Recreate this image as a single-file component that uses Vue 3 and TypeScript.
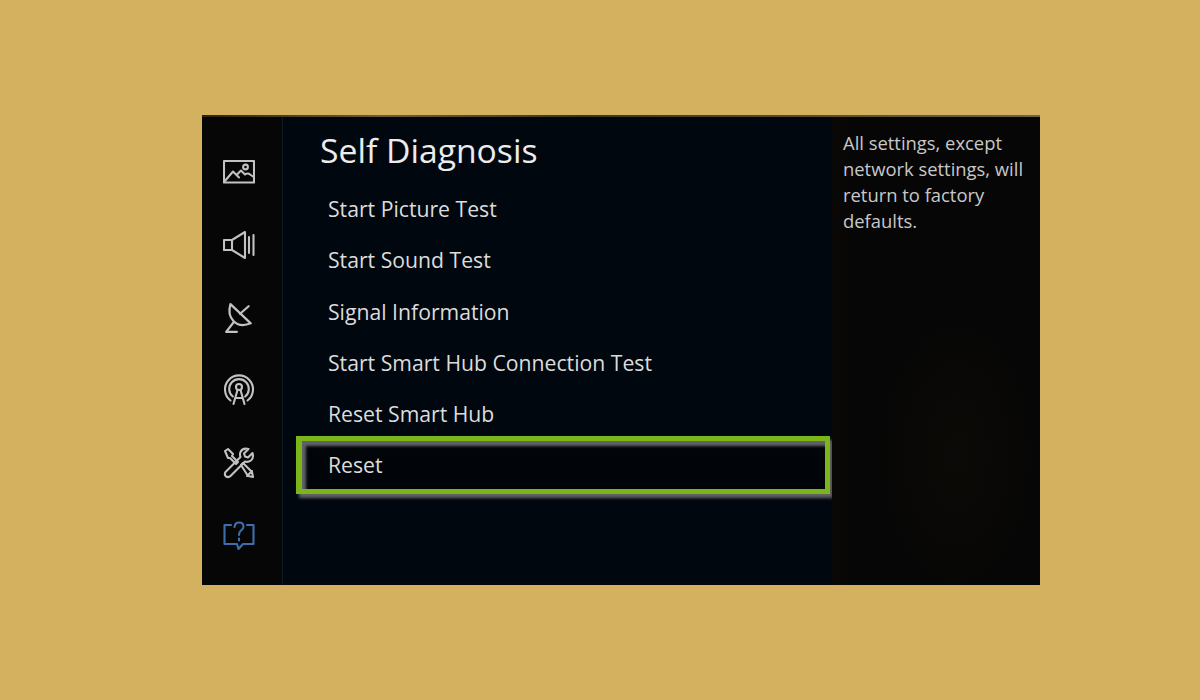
<script setup lang="ts">
const items = [
  'Start Picture Test',
  'Start Sound Test',
  'Signal Information',
  'Start Smart Hub Connection Test',
  'Reset Smart Hub',
  'Reset',
];
const selected = 'Reset';
</script>

<template>
  <div class="page">
    <div class="screen">
      <aside class="rail">
        <!-- picture -->
        <svg class="icon" viewBox="0 0 32 24">
          <rect x="1" y="1" width="30" height="21.5" />
          <path d="M1.5 21.5 L10 11.5 L16 17.5 M13.5 15 L18 10.5 L22 14.5 Q25 12.5 27 14.5 L30 16.5" />
          <circle cx="22.5" cy="7" r="2.4" />
        </svg>
        <!-- sound -->
        <svg class="icon" viewBox="0 0 32 30">
          <path d="M1 10 H9 V20 H1 Z M9 10 L22 2 V28 L9 20" />
          <path d="M26 7 V23 M30.5 5 V25" />
        </svg>
        <!-- broadcast dish -->
        <svg class="icon" viewBox="0 0 28 30">
          <path d="M6 2 Q3 12 9 18 Q15 24 25 20 Z" />
          <path d="M15 11 L23 4" />
          <path d="M9 19 L2 28 M2 28 H12" />
        </svg>
        <!-- network -->
        <svg class="icon" viewBox="0 0 32 32">
          <path d="M7.5 26.5 A14 14 0 1 1 24.5 26.5" />
          <path d="M9.8 22.5 A9.8 9.8 0 1 1 22.2 22.5" />
          <circle cx="16" cy="13" r="3" />
          <path d="M14.5 16 L10.5 30 M17.5 16 L21.5 30 M12.5 24 H19.5" />
        </svg>
        <!-- tools -->
        <svg class="icon" viewBox="0 0 32 32">
          <path d="M2 4 L5 2 L10 7 L9 9 L15 15 L13 17 L7 11 L5 11 Z" />
          <path d="M29.5 6 L25 10.5 L22 9.5 L21 6.5 L25.5 2 Q19.5 0.5 17.5 5 Q16.5 8 17.5 10 L2.5 25 Q1 27.5 3 29.5 Q5.5 31 7.5 29 L22 14.5 Q25 15.5 28 13.5 Q31 11 29.5 6 Z" />
          <path d="M18 18 L20 16 L29 25 L30 30 L25 29 Z M24 29 L29 24" />
        </svg>
        <!-- support -->
        <svg class="icon support" viewBox="0 0 32 30">
          <path d="M8 4 H1.5 V23 H14 L15.5 28 L20 23 H30.5 V4 H24" />
          <path d="M11.5 6 Q12 1.5 16 1.5 Q20.5 1.5 20.5 5.5 Q20.5 8 18 9.5 Q16 11 16 14" />
          <path d="M16 17.5 V19.5" />
        </svg>
      </aside>

      <main class="menu">
        <h1 class="title">Self Diagnosis</h1>
        <ul class="list">
          <li v-for="item in items" :key="item" class="row" :class="{ active: item === selected }">
            {{ item }}
          </li>
        </ul>
      </main>

      <section class="help">
        <p>All settings, except network settings, will return to factory defaults.</p>
      </section>
    </div>
  </div>
</template>

<style>
html, body { margin: 0; background: #d4b15f; }
</style>

<style scoped>
.page {
  width: 1200px;
  height: 700px;
  box-sizing: border-box;
  padding: 115px 160px 115px 202px;
  background: #d4b15f;
  font-family: 'Open Sans', 'Noto Sans', sans-serif;
}

.screen {
  position: relative;
  display: flex;
  height: 470px;
  background: #050505;
  box-sizing: border-box;
  padding-top: 2px;
}

/* warm glow along the top edge of the tv */
.screen::before {
  content: '';
  position: absolute;
  top: 0;
  left: 0;
  right: 0;
  height: 2px;
  background: linear-gradient(90deg, #2a2418, #6b5c3c 22%, #3b3322 45%, #5a4d33 75%, #6b6350);
}

.rail {
  width: 80px;
  flex: none;
  box-sizing: border-box;
  display: flex;
  flex-direction: column;
  align-items: center;
  padding: 39px 7px 33px 0;
  justify-content: space-between;
  background: #060606;
}

.icon {
  width: 32px;
  height: 32px;
  fill: none;
  stroke: #c2c2c2;
  stroke-width: 2.1;
  stroke-linejoin: round;
  stroke-linecap: round;
}

.support { stroke: #3c6fb0; }

.menu {
  width: 550px;
  flex: none;
  box-sizing: border-box;
  padding: 0 2px 0 13px;
  background: #01070e;
  border-left: 1px solid #0e1a20;
}

.title {
  margin: 0;
  padding-left: 24px;
  height: 66px;
  font-size: 33.7px;
  line-height: 66px;
  font-weight: 400;
  color: #ececec;
}

.list {
  list-style: none;
  margin: 0;
  padding: 0;
}

.row {
  height: 51.3px;
  line-height: 51px;
  box-sizing: border-box;
  padding-left: 32px;
  font-size: 21.2px;
  color: #dcdcdc;
}

.row.active {
  height: 58px;
  line-height: 48px;
  margin-top: -3px;
  padding-left: 26px;
  background: #01050a;
  border: 5px solid #7ab51a;
  border-left-width: 6px;
  box-shadow: inset 4px 5px 3px #626266, 3px 4px 3px #626266;
}

.help {
  flex: 1;
  padding: 13px 10px 0 11px;
  background:
    radial-gradient(ellipse 90px 160px at 60% 72%, #0c0a07, transparent),
    linear-gradient(90deg, #0a0806 0, #060606 30px);
}

.help p {
  margin: 0;
  font-size: 18.4px;
  line-height: 26px;
  color: #c8c8c8;
}
</style>
